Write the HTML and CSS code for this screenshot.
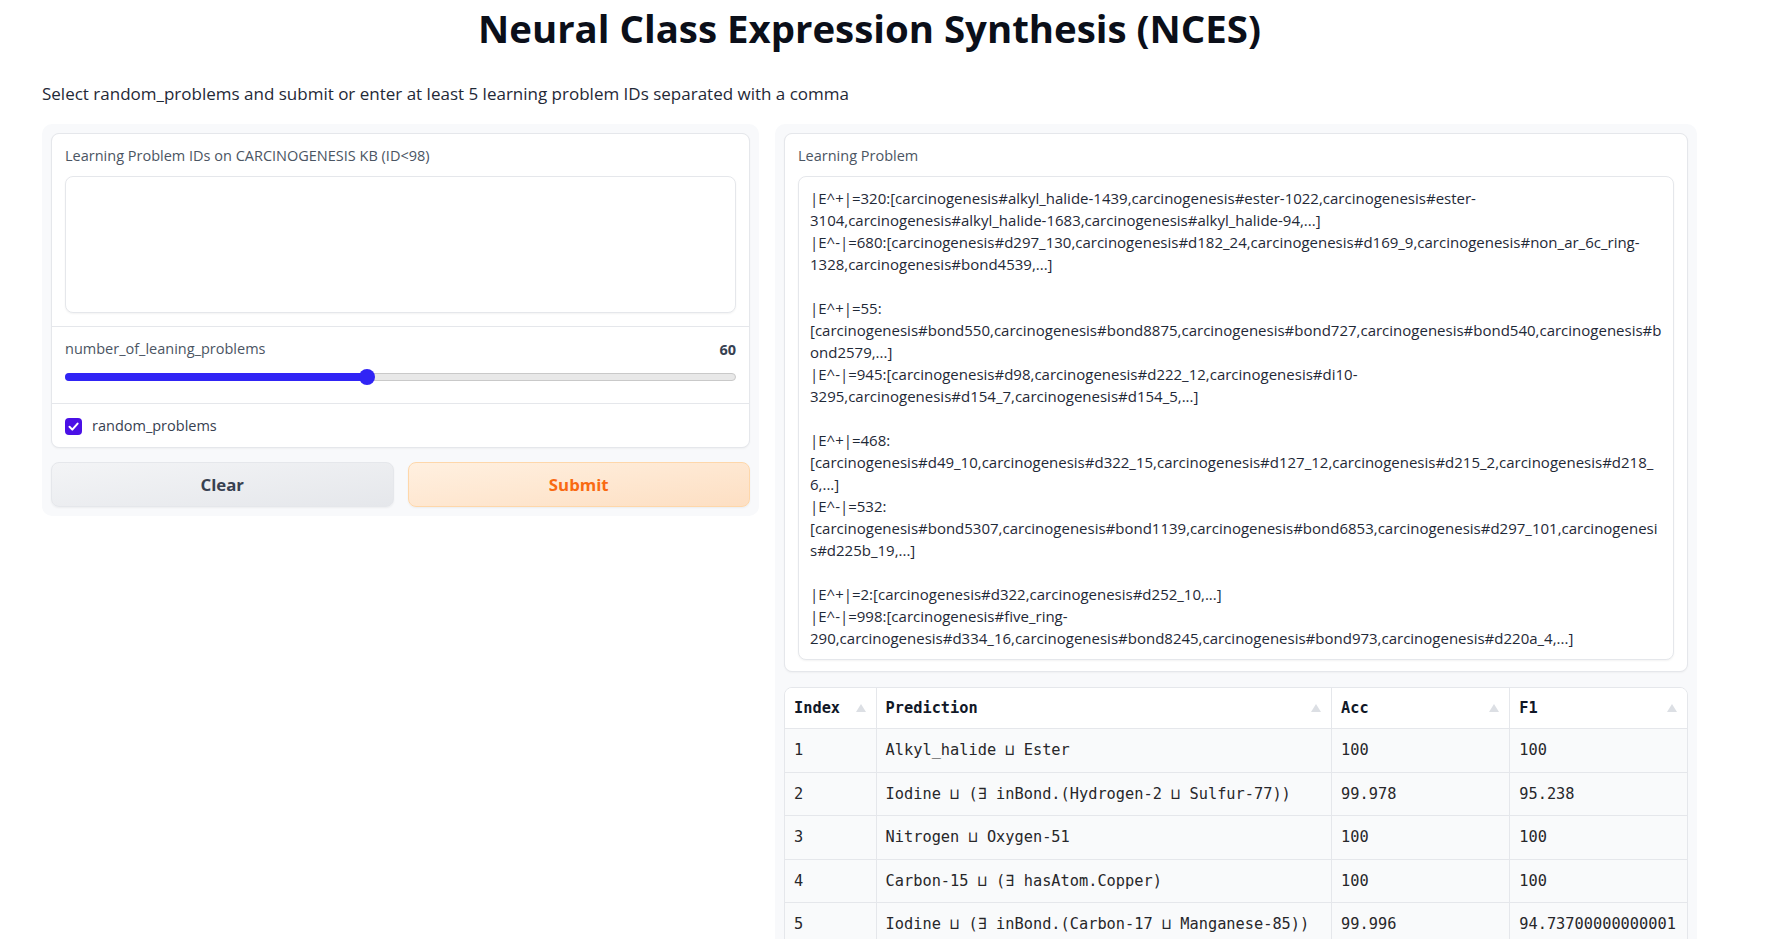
FILE: index.html
```html
<!DOCTYPE html>
<html lang="en">
<head>
<meta charset="utf-8">
<title>Neural Class Expression Synthesis (NCES)</title>
<link rel="stylesheet" href="styles.css">
</head>
<body>
<div class="app">
  <h1 class="title">Neural Class Expression Synthesis (NCES)</h1>
  <p class="subtitle">Select random_problems and submit or enter at least 5 learning problem IDs separated with a comma</p>
  <div class="row">
    <div class="col col-left">
      <div class="form">
        <div class="block block-input">
          <span class="label">Learning Problem IDs on CARCINOGENESIS KB (ID&lt;98)</span>
          <div class="textarea textarea-empty"></div>
        </div>
        <div class="block block-slider">
          <div class="slider-head">
            <span class="label label-inline">number_of_leaning_problems</span>
            <span class="slider-value">60</span>
          </div>
          <div class="slider">
            <div class="track"></div>
            <div class="fill" style="width:45%"></div>
            <div class="thumb" style="left:45%"></div>
          </div>
        </div>
        <div class="block block-check">
          <span class="checkbox"><svg width="17" height="17" viewBox="0 0 17 17"><polyline points="4.5,8.8 7.3,11.6 12.6,5.6" fill="none" stroke="#fff" stroke-width="2" stroke-linecap="round" stroke-linejoin="round"/></svg></span>
          <span class="check-label">random_problems</span>
        </div>
      </div>
      <div class="buttons">
        <button class="btn btn-secondary">Clear</button>
        <button class="btn btn-primary">Submit</button>
      </div>
    </div>
    <div class="col col-right">
      <div class="form">
        <div class="block block-output">
          <span class="label">Learning Problem</span>
          <div class="textarea textarea-output"><div class="line">|E^+|=320:[carcinogenesis#alkyl_halide-1439,carcinogenesis#ester-1022,carcinogenesis#ester-</div><div class="line">3104,carcinogenesis#alkyl_halide-1683,carcinogenesis#alkyl_halide-94,...]</div><div class="line">|E^-|=680:[carcinogenesis#d297_130,carcinogenesis#d182_24,carcinogenesis#d169_9,carcinogenesis#non_ar_6c_ring-</div><div class="line">1328,carcinogenesis#bond4539,...]</div><div class="line"> </div><div class="line">|E^+|=55:</div><div class="line">[carcinogenesis#bond550,carcinogenesis#bond8875,carcinogenesis#bond727,carcinogenesis#bond540,carcinogenesis#b</div><div class="line">ond2579,...]</div><div class="line">|E^-|=945:[carcinogenesis#d98,carcinogenesis#d222_12,carcinogenesis#di10-</div><div class="line">3295,carcinogenesis#d154_7,carcinogenesis#d154_5,...]</div><div class="line"> </div><div class="line">|E^+|=468:</div><div class="line">[carcinogenesis#d49_10,carcinogenesis#d322_15,carcinogenesis#d127_12,carcinogenesis#d215_2,carcinogenesis#d218_</div><div class="line">6,...]</div><div class="line">|E^-|=532:</div><div class="line">[carcinogenesis#bond5307,carcinogenesis#bond1139,carcinogenesis#bond6853,carcinogenesis#d297_101,carcinogenesi</div><div class="line">s#d225b_19,...]</div><div class="line"> </div><div class="line">|E^+|=2:[carcinogenesis#d322,carcinogenesis#d252_10,...]</div><div class="line">|E^-|=998:[carcinogenesis#five_ring-</div><div class="line">290,carcinogenesis#d334_16,carcinogenesis#bond8245,carcinogenesis#bond973,carcinogenesis#d220a_4,...]</div></div>
        </div>
      </div>
      <div class="table-wrap">
        <table class="results">
          <colgroup>
            <col class="c-index">
            <col class="c-pred">
            <col class="c-acc">
            <col class="c-f1">
          </colgroup>
          <thead>
            <tr>
              <th><div class="th-inner"><span>Index</span><span class="sort"></span></div></th>
              <th><div class="th-inner"><span>Prediction</span><span class="sort"></span></div></th>
              <th><div class="th-inner"><span>Acc</span><span class="sort"></span></div></th>
              <th><div class="th-inner"><span>F1</span><span class="sort"></span></div></th>
            </tr>
          </thead>
          <tbody>
            <tr><td>1</td><td>Alkyl_halide ⊔ Ester</td><td>100</td><td>100</td></tr>
            <tr><td>2</td><td>Iodine ⊔ (∃ inBond.(Hydrogen-2 ⊔ Sulfur-77))</td><td>99.978</td><td>95.238</td></tr>
            <tr><td>3</td><td>Nitrogen ⊔ Oxygen-51</td><td>100</td><td>100</td></tr>
            <tr><td>4</td><td>Carbon-15 ⊔ (∃ hasAtom.Copper)</td><td>100</td><td>100</td></tr>
            <tr><td>5</td><td>Iodine ⊔ (∃ inBond.(Carbon-17 ⊔ Manganese-85))</td><td>99.996</td><td>94.73700000000001</td></tr>
          </tbody>
        </table>
      </div>
    </div>
  </div>
</div>
</body>
</html>
```
FILE: styles.css
```css
* { box-sizing: border-box; }

body {
  margin: 0;
  background: #ffffff;
  font-family: "Open Sans", "Noto Sans", sans-serif;
  color: #1f2937;
}

.app {
  width: 1655px;
  margin-left: 42px;
  padding-bottom: 20px;
}

.title {
  margin: 0;
  padding-top: 5px;
  font-size: 38.4px;
  line-height: 46px;
  font-weight: 700;
  text-align: center;
  color: #0b0f19;
}

.subtitle {
  margin: 31px 0 0;
  font-size: 17px;
  line-height: 24px;
  color: #1f2937;
}

.row {
  display: grid;
  grid-template-columns: 717px 922px;
  gap: 16px;
  margin-top: 18px;
  align-items: start;
}

.col {
  background: #f8f9fb;
  border-radius: 10px;
  padding: 9px;
  display: flex;
  flex-direction: column;
}

.col-left { gap: 14px; }
.col-right { gap: 15px; }

.form {
  border: 1px solid #e5e7eb;
  border-radius: 8px;
  background: #e5e7eb;
  display: flex;
  flex-direction: column;
  gap: 1px;
  overflow: hidden;
  box-shadow: 0 1px 2px rgba(0, 0, 0, 0.04);
}

.block {
  background: #ffffff;
  padding: 12px 13px;
}

.block-input { padding-bottom: 13px; }
.block-output { padding-bottom: 11px; }

.label {
  display: block;
  font-size: 14.5px;
  line-height: 20px;
  color: #4b5563;
  margin-bottom: 10px;
}

.label-inline { margin-bottom: 0; }

.textarea {
  border: 1px solid #e5e7eb;
  border-radius: 8px;
  background: #ffffff;
  box-shadow: 0 1px 2px rgba(0, 0, 0, 0.05);
}

.textarea-empty { height: 137px; }

.textarea-output {
  padding: 10px 11px;
  font-size: 15px;
  line-height: 22px;
  color: #1f2937;
  overflow: hidden;
}

.line {
  white-space: pre;
  height: 22px;
}

/* slider */
.block-slider { padding-bottom: 16px; }

.slider-head {
  display: flex;
  justify-content: space-between;
  align-items: center;
  height: 20px;
}

.slider-value {
  font-size: 14.5px;
  font-weight: 700;
  color: #374151;
}

.slider {
  position: relative;
  height: 20px;
  margin-top: 8px;
}

.track {
  position: absolute;
  left: 0;
  right: 0;
  top: 6px;
  height: 8px;
  background: #e8e8e8;
  border: 1px solid #c9c9c9;
  border-radius: 4px;
}

.fill {
  position: absolute;
  left: 0;
  top: 6px;
  height: 8px;
  background: #3024f5;
  border-radius: 4px;
}

.thumb {
  position: absolute;
  top: 2px;
  width: 16px;
  height: 16px;
  margin-left: -8px;
  border-radius: 50%;
  background: #3024f5;
}

/* checkbox */
.block-check {
  padding-bottom: 11px;
  display: flex;
  align-items: center;
  height: 43px;
}

.checkbox {
  width: 17px;
  height: 17px;
  border-radius: 4px;
  background: #4a10e6;
  display: flex;
}

.check-label {
  margin-left: 10px;
  font-size: 14.5px;
  line-height: 20px;
  color: #374151;
}

/* buttons */
.buttons {
  display: grid;
  grid-template-columns: 1fr 1fr;
  gap: 14px;
}

.btn {
  height: 45px;
  border-radius: 8px;
  font-family: "Open Sans", "Noto Sans", sans-serif;
  font-weight: 700;
  font-size: 16.8px;
  cursor: pointer;
  box-shadow: 0 1px 2px rgba(0, 0, 0, 0.05);
}

.btn-secondary {
  background: linear-gradient(to bottom right, #f3f4f6, #e5e7eb);
  border: 1px solid #e5e7eb;
  color: #374151;
}

.btn-primary {
  background: linear-gradient(to bottom right, #fff0e0, #fddfc3);
  border: 1px solid #fed7aa;
  color: #f96a12;
}

/* table */
.table-wrap {
  border: 1px solid #e5e7eb;
  border-radius: 8px;
  overflow: hidden;
  background: #ffffff;
}

.results {
  width: 100%;
  border-collapse: collapse;
  table-layout: fixed;
  font-family: "DejaVu Sans Mono", "Liberation Mono", monospace;
  font-size: 15.3px;
}

.c-index { width: 91px; }
.c-pred { width: 455px; }
.c-acc { width: 178px; }
.c-f1 { width: 177px; }

.results th {
  background: #ffffff;
  text-align: left;
  font-weight: 700;
  color: #111827;
  padding: 10px 9px;
  line-height: 20px;
  border-bottom: 1px solid #e5e7eb;
  border-right: 1px solid #e5e7eb;
}

.results td {
  background: #f9fafb;
  color: #27272a;
  padding: 11px 9px 10.6px;
  line-height: 21px;
  border-bottom: 1px solid #e5e7eb;
  border-right: 1px solid #e5e7eb;
  white-space: nowrap;
  overflow: hidden;
}

.results th:last-child,
.results td:last-child { border-right: none; }

.th-inner {
  display: flex;
  justify-content: space-between;
  align-items: center;
}

.sort {
  width: 0;
  height: 0;
  border-left: 5px solid transparent;
  border-right: 5px solid transparent;
  border-bottom: 8px solid #dcdfe4;
  margin-right: 1px;
}
```
